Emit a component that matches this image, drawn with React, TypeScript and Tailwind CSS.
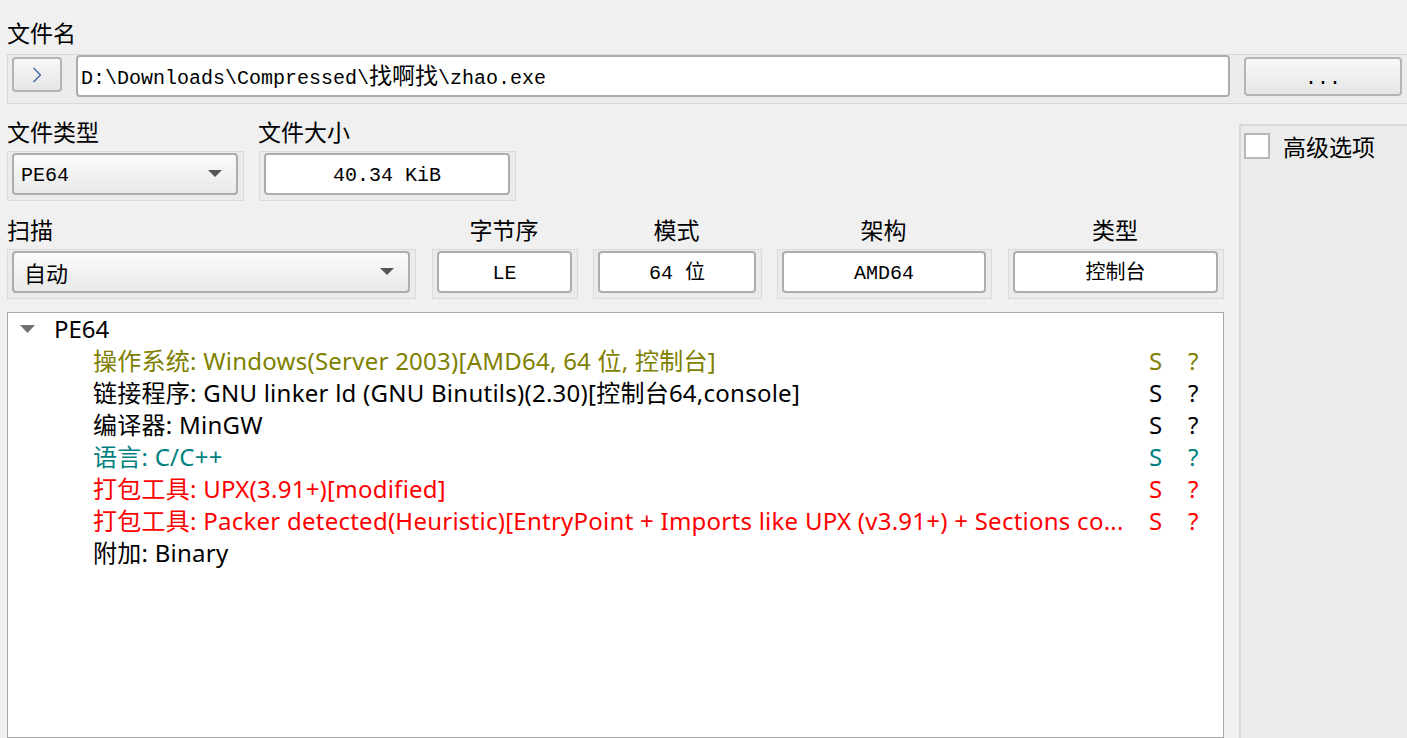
import React from "react";

const cjk = "font-['Noto_Sans_CJK_SC',sans-serif]";
const mono = "font-['Liberation_Mono','Noto_Sans_CJK_SC',monospace]";
const tree = "font-['Noto_Sans','Noto_Sans_CJK_SC',sans-serif]";

function Frame({ className, children }: { className: string; children: React.ReactNode }) {
  return (
    <div className={`h-[50px] border border-[#dadada] bg-[#ebebeb] pl-[4px] pt-[1px] pr-[5px] ${className}`}>
      {children}
    </div>
  );
}

function Combo({ value }: { value: string }) {
  return (
    <div className="flex h-[42px] items-center justify-between rounded-[4px] border-2 border-[#adadad] bg-gradient-to-b from-[#fbfbfb] to-[#e9e9e9] pl-[7px] pr-[14px]">
      <span className={`${mono} pt-[4px] text-[20px] text-black`}>{value}</span>
      <svg width="14" height="8" viewBox="0 0 14 8">
        <polygon points="0,0 14,0 7,7" fill="#555555" />
      </svg>
    </div>
  );
}

function Field({ value }: { value: string }) {
  return (
    <div className={`flex h-[42px] items-center justify-center rounded-[4px] border-2 border-[#adadad] bg-white pt-[4px] ${mono} text-[20px] text-black`}>
      {value}
    </div>
  );
}

type Row = { text: string; color: string };

// last packer line is elided in the original widget, kept as shown
const rows: Row[] = [
  { text: "操作系统: Windows(Server 2003)[AMD64, 64 位, 控制台]", color: "text-[#808000]" },
  { text: "链接程序: GNU linker ld (GNU Binutils)(2.30)[控制台64,console]", color: "text-black" },
  { text: "编译器: MinGW", color: "text-black" },
  { text: "语言: C/C++", color: "text-[#008080]" },
  { text: "打包工具: UPX(3.91+)[modified]", color: "text-[#ff0000]" },
  {
    text: "打包工具: Packer detected(Heuristic)[EntryPoint + Imports like UPX (v3.91+) + Sections co...",
    color: "text-[#ff0000]",
  },
];

export default function App() {
  const small = [
    { label: "字节序", value: "LE", w: "w-[146px]" },
    { label: "模式", value: "64 位", w: "w-[169px]" },
    { label: "架构", value: "AMD64", w: "w-[215px]" },
    { label: "类型", value: "控制台", w: "w-[216px]" },
  ];

  return (
    <div className="flex h-[738px] w-[1407px] flex-col overflow-hidden bg-[#f0f0f0]">
      {/* file name */}
      <div className={`mt-[17px] h-[30px] pl-[7px] ${cjk} text-[23px] leading-[30px] text-black`}>文件名</div>
      <div className="ml-[7px] mt-[7px] flex h-[50px] w-[1410px] items-start border border-[#d8d8d8] bg-[#ececec]">
        <div className="ml-[4px] mt-[2px] flex h-[35px] w-[50px] items-center justify-center rounded-[4px] border-2 border-[#b4b4b4] bg-gradient-to-b from-[#f8f8f8] to-[#e6e6e6]">
          <svg width="10" height="16" viewBox="0 0 10 16">
            <polyline points="1.5,1 8.5,8 1.5,15" fill="none" stroke="#2f5f9f" strokeWidth="1.2" />
          </svg>
        </div>
        <div className={`ml-[14px] flex h-[42px] w-[1154px] items-center rounded-[4px] border-2 border-[#adadad] bg-white pl-[3px] pt-[5px] ${mono} text-[20px] text-black`}>
          D:\Downloads\Compressed\<span className="text-[23px]">找啊找</span>\zhao.exe
        </div>
        <div className={`ml-[14px] mt-[2px] flex h-[39px] w-[158px] items-center justify-center rounded-[4px] border-2 border-[#b4b4b4] bg-gradient-to-b from-[#f8f8f8] to-[#e6e6e6] pt-[4px] ${mono} text-[20px] text-black`}>
          ...
        </div>
      </div>

      <div className="flex flex-1">
        {/* left column */}
        <div className="flex w-[1224px] flex-col">
          <div className={`mt-[12px] flex h-[30px] ${cjk} text-[23px] leading-[30px] text-black`}>
            <span className="ml-[7px] w-[251px]">文件类型</span>
            <span>文件大小</span>
          </div>
          <div className="mt-[5px] flex">
            <Frame className="ml-[7px] w-[237px]">
              <Combo value="PE64" />
            </Frame>
            <Frame className="ml-[15px] w-[257px]">
              <Field value="40.34 KiB" />
            </Frame>
          </div>

          <div className="mt-[13px] flex">
            <div className="ml-[7px] flex w-[409px] flex-col">
              <div className={`h-[30px] ${cjk} text-[23px] leading-[30px] text-black`}>扫描</div>
              <Frame className="mt-[5px] w-[409px]">
                <div className="flex h-[42px] items-center justify-between rounded-[4px] border-2 border-[#adadad] bg-gradient-to-b from-[#fbfbfb] to-[#e9e9e9] pl-[10px] pr-[14px]">
                  <span className={`${cjk} text-[22px] text-black`}>自动</span>
                  <svg width="14" height="8" viewBox="0 0 14 8">
                    <polygon points="0,0 14,0 7,7" fill="#555555" />
                  </svg>
                </div>
              </Frame>
            </div>
            {small.map((s, i) => (
              <div key={s.label} className={`flex flex-col ${s.w} ${i === 0 || i === 3 ? "ml-[16px]" : "ml-[15px]"}`}>
                <div className={`h-[30px] pr-[2px] text-center ${cjk} text-[23px] leading-[30px] text-black`}>{s.label}</div>
                <Frame className="mt-[5px] w-full">
                  <Field value={s.value} />
                </Frame>
              </div>
            ))}
          </div>

          {/* tree */}
          <div className={`ml-[7px] mt-[13px] flex-1 border border-[#a8a8a8] bg-white ${tree} text-[24px] leading-[32px]`}>
            <div className="flex h-[32px] items-center">
              <svg className="ml-[12px]" width="15" height="8" viewBox="0 0 15 8">
                <polygon points="0,0 15,0 7.5,8" fill="#707070" />
              </svg>
              <span className="ml-[19px] text-black">PE64</span>
            </div>
            {rows.map((r) => (
              <div key={r.text} className={`flex h-[32px] items-center pl-[85px] ${r.color}`}>
                <span className="w-[1046px] whitespace-nowrap tracking-[0.25px]">{r.text}</span>
                <span className="ml-[10px] w-[39px]">S</span>
                <span>?</span>
              </div>
            ))}
            <div className="flex h-[32px] items-center pl-[85px] tracking-[0.25px] text-black">附加: Binary</div>
          </div>
        </div>

        {/* right panel */}
        <div className="ml-[15px] mt-[20px] flex-1 border-l-2 border-t-2 border-[#d8d8d8] bg-[#ebebeb]">
          <div className="ml-[3px] mt-[7px] flex items-start">
            <div className="h-[26px] w-[26px] border-2 border-[#b8b8b8] bg-white" />
            <span className={`ml-[13px] ${cjk} text-[23px] leading-[26px] text-black`}>高级选项</span>
          </div>
        </div>
      </div>
    </div>
  );
}
